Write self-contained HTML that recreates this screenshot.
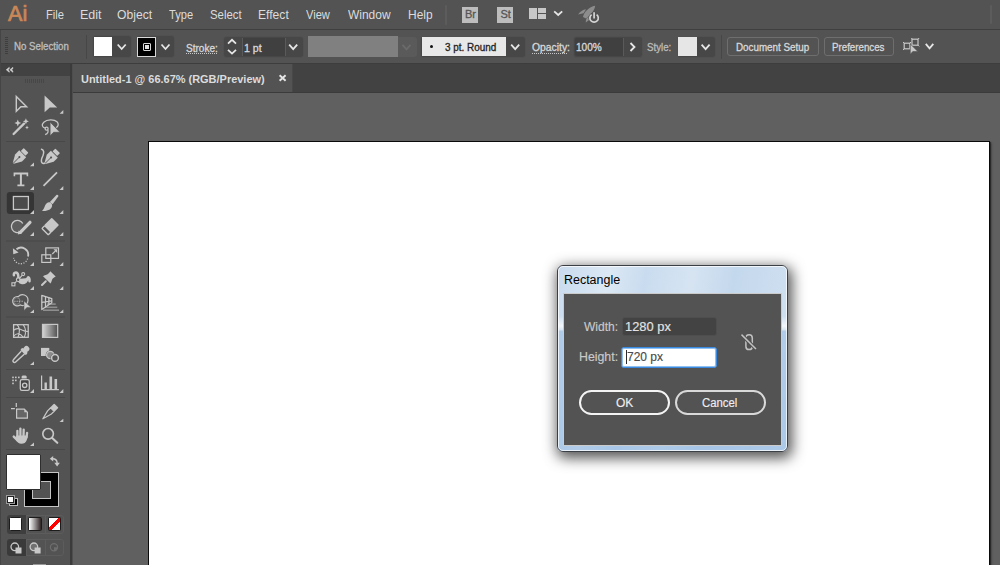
<!DOCTYPE html>
<html><head><meta charset="utf-8">
<style>
*{margin:0;padding:0;box-sizing:border-box}
html,body{width:1000px;height:565px;overflow:hidden;background:#606060;font-family:"Liberation Sans",sans-serif}
.a{position:absolute}
.t{position:absolute;white-space:nowrap;line-height:1}
#menubar{left:0;top:0;width:1000px;height:29px;background:#535353}
#ctrl{left:0;top:29px;width:1000px;height:35px;background:#535353;border-top:1px solid #3f3f3f;border-bottom:1px solid #3d3d3d}
#tabrow{left:72px;top:64px;width:928px;height:29px;background:#424242;border-bottom:1.5px solid #3b3b3b}
#tab{left:73px;top:64px;width:220px;height:27.5px;background:#535353;border-right:1px solid #484848}
#tools{left:0;top:64px;width:70px;height:501px;background:#535353}
#toolhead{left:0;top:64px;width:70px;height:12px;background:#424242}
#toolsep{left:70px;top:64px;width:3px;height:501px;background:linear-gradient(90deg,#3b3b3b 0 2px,#4e4e4e 2px)}
.m{color:#dcdcdc;font-size:12.5px}
.c{color:#d8d8d8;font-size:10px;-webkit-text-stroke:0.3px currentColor}
.dd{position:absolute;background:#474747;border-radius:3px;box-shadow:0 0 0 1px #505050}
.chev{position:absolute;width:6px;height:6px;border-right:1.6px solid #d8d8d8;border-bottom:1.6px solid #d8d8d8;transform:rotate(45deg)}
.sep{position:absolute;background:#474747;width:1px}
.tsep{position:absolute;left:6px;width:59px;height:1px;background:#4a4a4a}
.tri{position:absolute;width:0;height:0;border-left:4px solid transparent;border-bottom:4px solid #c8c8c8}
svg{position:absolute;overflow:visible}
</style></head><body>
<!-- MENU BAR -->
<div id="menubar" class="a"></div>
<div id="t1" class="t" style="left:8.0px;top:3px;font-size:22px;color:#c98758;-webkit-text-stroke:0.7px #c98758;transform-origin:0 0;transform:scaleX(0.98)">Ai</div>
<div id="t2" class="t m" style="left:46.1px;top:9px;transform-origin:0 0;transform:scaleX(0.895)">File</div>
<div id="t3" class="t m" style="left:80.0px;top:9px">Edit</div>
<div id="t4" class="t m" style="left:117.0px;top:9px;transform-origin:0 0;transform:scaleX(0.971)">Object</div>
<div id="t5" class="t m" style="left:169.0px;top:9px;transform-origin:0 0;transform:scaleX(0.889)">Type</div>
<div id="t6" class="t m" style="left:210.1px;top:9px;transform-origin:0 0;transform:scaleX(0.912)">Select</div>
<div id="t7" class="t m" style="left:258.0px;top:9px;transform-origin:0 0;transform:scaleX(0.969)">Effect</div>
<div id="t8" class="t m" style="left:306.0px;top:9px;transform-origin:0 0;transform:scaleX(0.889)">View</div>
<div id="t9" class="t m" style="left:348.0px;top:9px;transform-origin:0 0;transform:scaleX(0.957)">Window</div>
<div id="t10" class="t m" style="left:408.0px;top:9px;transform-origin:0 0;transform:scaleX(0.958)">Help</div>
<div class="sep" style="left:445px;top:5px;width:2.3px;height:19.5px;background:#5c5c5c;border-radius:1px"></div>
<div class="a" style="left:462px;top:7px;width:16px;height:16px;background:#bdbdbd"></div>
<div id="t11" class="t" style="left:465px;top:9px;font-size:11px;color:#555;-webkit-text-stroke:0.3px #555">Br</div>
<div class="a" style="left:497px;top:7px;width:16px;height:16px;background:#bdbdbd"></div>
<div id="t12" class="t" style="left:500.5px;top:9px;font-size:11px;color:#555;-webkit-text-stroke:0.3px #555">St</div>
<div class="a" style="left:529px;top:8px;width:8px;height:11px;background:#c8c8c8"></div>
<div class="a" style="left:538px;top:8px;width:8px;height:5px;background:#c8c8c8"></div>
<div class="a" style="left:538px;top:14px;width:8px;height:5px;background:#c8c8c8"></div>
<svg style="left:0;top:0" width="1000" height="29">
<path d="M554.2 11.3 L558.2 15 L562.2 11.3" fill="none" stroke="#e6e6e6" stroke-width="1.8"/>
<path d="M583 16.9 C584 12 589 7 595.2 5.8 C594.5 11 590 15.5 586 18.5Z" fill="#8c8c8c"/>
<path d="M578 14.6 C580 11.5 583 9.5 586 9.2 L583.5 13.2Z" fill="#8c8c8c"/>
<path d="M585.8 22.5 C585.5 20 586.5 18 588.5 16.8 L589 20Z" fill="#8c8c8c"/>
<circle cx="594.1" cy="17.9" r="5.6" fill="#535353"/>
<path d="M591.6 14.6 A4.2 4.2 0 1 0 596.6 14.6" fill="none" stroke="#d4d4d4" stroke-width="1.7"/>
<path d="M594.1 12.2 V18.5" stroke="#535353" stroke-width="3"/>
<path d="M594.1 12.2 V18.5" stroke="#d4d4d4" stroke-width="1.7"/>
</svg>
<div class="sep" style="left:989.6px;top:5px;width:2.6px;height:19.4px;background:#5c5c5c;border-radius:1px"></div>

<!-- CONTROL BAR -->
<div id="ctrl" class="a"></div>
<div class="a" style="left:5px;top:37px;width:3px;height:18px;background:repeating-linear-gradient(#3e3e3e 0 1px,transparent 1px 2px)"></div>
<div id="t13" class="t c" style="left:14.1px;top:42px;color:#bebebe;font-size:10px;transform-origin:0 0;transform:scaleX(0.967)">No Selection</div>
<div class="sep" style="left:86px;top:35px;height:24px;background:#474747"></div>
<div class="dd" style="left:92.8px;top:36.3px;width:38px;height:20.7px"></div>
<div class="a" style="left:93.5px;top:37px;width:18.5px;height:19px;background:#fff"></div>
<div class="dd" style="left:136.8px;top:36.3px;width:37.5px;height:20.7px"></div>
<div class="a" style="left:137px;top:37px;width:19px;height:19.5px;background:#000;border:1px solid #d8d8d8"></div>
<div class="a" style="left:143px;top:43px;width:7.5px;height:7.5px;border:1px solid #d8d8d8;border-radius:1px"></div>
<div class="a" style="left:145px;top:45px;width:3.5px;height:3.5px;background:#e0e0e0"></div>
<div id="t14" class="t c" style="left:186.1px;top:44px;transform-origin:0 0;transform:scaleX(1.004)">Stroke:</div>
<div class="a" style="left:186px;top:53px;width:31px;height:1px;background:repeating-linear-gradient(90deg,#c8c8c8 0 1px,transparent 1px 2px)"></div>
<div class="dd" style="left:223.5px;top:36.5px;width:79.5px;height:20px"></div>
<div class="a" style="left:241.5px;top:37.5px;width:44px;height:18px;background:#404040;border-left:1px solid #5a5a5a;border-right:1px solid #5a5a5a"></div>
<div id="t15" class="t c" style="left:243.9px;top:44px;transform-origin:0 0;transform:scaleX(1.062)">1 pt</div>
<div class="a" style="left:308px;top:36.3px;width:89.5px;height:20.5px;background:#808080"></div>
<div class="a" style="left:397.5px;top:36.5px;width:19px;height:20px;background:#5a5a5a;border-radius:0 3px 3px 0"></div>
<div class="dd" style="left:421px;top:36.5px;width:103.5px;height:20px"></div>
<div class="a" style="left:421.5px;top:37px;width:84.5px;height:19px;background:#e8e8e8"></div>
<div class="a" style="left:429.6px;top:45.3px;width:3px;height:3px;background:#111;border-radius:50%"></div>
<div id="t16" class="t c" style="left:445.0px;top:43px;color:#222;transform-origin:0 0;transform:scaleX(0.989)">3 pt. Round</div>
<div id="t17" class="t c" style="left:532.0px;top:43px;transform-origin:0 0;transform:scaleX(1.034)">Opacity:</div>
<div class="a" style="left:532px;top:53px;width:36px;height:1px;background:repeating-linear-gradient(90deg,#c8c8c8 0 1px,transparent 1px 2px)"></div>
<div class="dd" style="left:573.5px;top:36.5px;width:68px;height:20px"></div>
<div class="a" style="left:574.5px;top:37.5px;width:49px;height:18px;background:#404040;border-right:1px solid #5a5a5a;border-radius:2px 0 0 2px"></div>
<div id="t18" class="t c" style="left:576.1px;top:43px;transform-origin:0 0;transform:scaleX(1.005)">100%</div>
<div id="t19" class="t c" style="left:647.1px;top:43px;color:#bcbcbc;transform-origin:0 0;transform:scaleX(0.968)">Style:</div>
<div class="dd" style="left:677.5px;top:36.5px;width:37px;height:20px"></div>
<div class="a" style="left:678px;top:37px;width:18.5px;height:19px;background:#e6e6e6"></div>
<div class="sep" style="left:720.5px;top:35px;height:24px;background:#474747"></div>
<div class="a" style="left:727px;top:37px;width:91.5px;height:18.5px;border:1px solid #6e6e6e;border-radius:3px"></div>
<div id="t20" class="t c" style="left:736.0px;top:43px;transform-origin:0 0;transform:scaleX(0.982)">Document Setup</div>
<div class="a" style="left:823.7px;top:37px;width:70.3px;height:18.5px;border:1px solid #6e6e6e;border-radius:3px"></div>
<div id="t21" class="t c" style="left:832.1px;top:43px;transform-origin:0 0;transform:scaleX(0.973)">Preferences</div>
<svg style="left:0;top:0" width="1000" height="64"><path d="M117.7 44.5 L121.7 49.0 L125.7 44.5" fill="none" stroke="#e6e6e6" stroke-width="1.8"/><path d="M161.5 44.5 L165.5 49.0 L169.5 44.5" fill="none" stroke="#e6e6e6" stroke-width="1.8"/><path d="M228 43.6 L232 39.8 L236 43.6" fill="none" stroke="#e6e6e6" stroke-width="1.8"/><path d="M228 49.8 L232.0 53.599999999999994 L236 49.8" fill="none" stroke="#e6e6e6" stroke-width="1.8"/><path d="M289.2 44.6 L293.2 49.1 L297.2 44.6" fill="none" stroke="#e6e6e6" stroke-width="1.8"/><path d="M402.5 44.8 L406.5 49.3 L410.5 44.8" fill="none" stroke="#6a6a6a" stroke-width="1.8"/><path d="M511.2 44.6 L515.2 49.1 L519.2 44.6" fill="none" stroke="#e6e6e6" stroke-width="1.8"/><path d="M630.5 43 L634.5 47 L630.5 51" fill="none" stroke="#e6e6e6" stroke-width="1.8"/><path d="M701.6 44.6 L705.6 49.1 L709.6 44.6" fill="none" stroke="#e6e6e6" stroke-width="1.8"/><path d="M925.8 43.8 L929.55 48.3 L933.3 43.8" fill="none" stroke="#e6e6e6" stroke-width="1.8"/><g fill="none" stroke="#c8c8c8" stroke-width="1.2"><rect x="904.2" y="43.2" width="5.6" height="5.6"/><rect x="912" y="39.2" width="6" height="6"/></g><g stroke="#c8c8c8" stroke-width="1"><path d="M903 42 l1.5 1.5 M911 42 l-1.5 1.5 M903 50 l1.5 -1.5 M911.3 38 l1.3 1.3 M919.2 38 l-1.3 1.3 M919.2 46.4 l-1.3 -1.3"/></g><path d="M910.3 44 V54.3 L912.8 51.5 H917.8Z" fill="#c8c8c8" stroke="#535353" stroke-width="0.6"/></svg>
<!-- TAB ROW -->
<div id="tabrow" class="a"></div>
<div id="tab" class="a"></div>
<div id="t22" class="t" style="left:81.0px;top:74px;font-size:11.5px;font-weight:bold;color:#dcdcdc;transform-origin:0 0;transform:scaleX(0.953)">Untitled-1 @ 66.67% (RGB/Preview)</div>
<svg style="left:0;top:0" width="300" height="93"><path d="M279.6 75.2 L285.6 80.8 M285.6 75.2 L279.6 80.8" stroke="#e6e6e6" stroke-width="1.9"/></svg>

<!-- ARTBOARD -->
<div class="a" style="left:148px;top:141px;width:842px;height:430px;background:#fff;border:1px solid #0a0a0a;box-shadow:1px 1px 1px rgba(0,0,0,.45),2px 2px 2px rgba(0,0,0,.2)"></div>

<!-- TOOLS -->
<div id="tools" class="a"></div>
<div id="toolhead" class="a"></div>
<div id="toolsep" class="a"></div>
<div class="a" style="left:0;top:30px;width:1px;height:535px;background:#454545"></div>
<!--TB-->
<svg style="left:0;top:0" width="72" height="565" viewBox="0 0 72 565">
<g fill="none" stroke="#c8c8c8" stroke-width="1.3">
<!-- header << -->
<path d="M9.3 67.3 L6.2 69.8 L9.3 72.3 V70.9 L8 69.8 L9.3 68.7Z M12.9 67.3 L9.8 69.8 L12.9 72.3 V70.9 L11.6 69.8 L12.9 68.7Z" fill="#d4d4d4" stroke="#d4d4d4" stroke-width="0.5"/>
<!-- grip -->
<path d="M25.5 79v4M27.5 79v4M29.5 79v4M31.5 79v4M33.5 79v4M35.5 79v4M37.5 79v4M39.5 79v4M41.5 79v4M43.5 79v4" stroke="#474747" stroke-width="1"/>
<!-- row1: outline arrow -->
<path d="M16.3 96.6 V111.3 L20.9 106.7 H26.6 Z" stroke-width="1.45" stroke-linejoin="miter"/>
</g>
<g fill="#c8c8c8">
<path d="M44.6 95.6 V112.3 L49.8 107.4 H57.2 Z"/>
<!-- triangles -->
<path d="M59.6 113.8 L63.3 110 V113.8Z"/>
<path d="M30 166.3 L34 162.4 V166.3Z"/>
<path d="M30 190 L34 186 V190Z"/>
<path d="M59.5 190 L63.3 186 V190Z"/>
<path d="M30 214 L34 210 V214Z"/>
<path d="M59.5 214 L63.3 210 V214Z"/>
<path d="M30 236 L34 232 V236Z"/>
<path d="M59.5 236 L63.3 232 V236Z"/>
<path d="M30 266 L34 262 V266Z"/>
<path d="M59.5 266 L63.3 262 V266Z"/>
<path d="M30 290 L34 286 V290Z"/>
<path d="M59.5 290 L63.3 286 V290Z"/>
<path d="M30 313 L34 309.4 V313Z"/>
<path d="M59.5 313 L63.3 309.4 V313Z"/>
<path d="M30 365 L34 361.4 V365Z"/>
<path d="M30 393 L34 389 V393Z"/>
<path d="M59.5 393 L63.3 389 V393Z"/>
<path d="M59.5 422 L63.3 418.7 V422Z"/>
<path d="M30 446 L34 442.4 V446Z"/>
</g>
<!-- separators -->
<g fill="#484848">
<rect x="6" y="141" width="59" height="1"/>
<rect x="6" y="240.5" width="59" height="1"/>
<rect x="6" y="316.5" width="59" height="1"/>
<rect x="6" y="369" width="59" height="1"/>
<rect x="6" y="397" width="59" height="1"/>
<rect x="6" y="449" width="59" height="1"/>
</g>
<!-- row2: magic wand -->
<g fill="#c8c8c8">
<path d="M13.6 134 L24 123.6" stroke="#c8c8c8" stroke-width="2.3" stroke-linecap="round"/>
<path d="M17.8 119.6 L18.8 122 L21.2 123 L18.8 124 L17.8 126.4 L16.8 124 L14.4 123 L16.8 122Z"/>
<path d="M25.9 118.3 L26.8 120.4 L28.9 121.3 L26.8 122.2 L25.9 124.3 L25 122.2 L22.9 121.3 L25 120.4Z"/>
<path d="M27 125.6 L27.6 126.9 L28.9 127.5 L27.6 128.1 L27 129.4 L26.4 128.1 L25.1 127.5 L26.4 126.9Z"/>
</g>
<!-- lasso -->
<g fill="none" stroke="#c8c8c8" stroke-width="1.25">
<path d="M45.5 128.2 C42 127.5 41.3 124.5 43.8 122.2 C47 119.3 54 119 57 121.8 C58.8 123.6 58.6 126.3 56.3 127.6"/>
<circle cx="46.6" cy="128.7" r="1.5"/>
<path d="M47.8 129.8 C48.5 131.5 48 133.5 45.2 134.6"/>
</g>
<path d="M50.1 122 V135.8 L53.6 132.3 H60 Z" fill="#c8c8c8" stroke="#535353" stroke-width="0.7"/>
<!-- row3: pen -->
<g transform="translate(19.7 156.8) rotate(45)" fill="#c8c8c8">
<rect x="-3.3" y="-9" width="6.6" height="4.1" rx="0.6"/>
<path d="M-4.9 -4.2 H4.9 V1.6 L0.7 9 H-0.7 L-4.9 1.6Z"/>
<path d="M0 9.2 V0.6" stroke="#535353" stroke-width="0.9"/>
<circle cx="0" cy="0.4" r="1.05" fill="#535353"/>
</g>
<g transform="translate(51.35 157.15) rotate(45)" fill="#c8c8c8">
<rect x="-3.3" y="-9" width="6.6" height="4.1" rx="0.6"/>
<path d="M-4.9 -4.2 H4.9 V1.6 L0.7 9 H-0.7 L-4.9 1.6Z"/>
<path d="M0 9.2 V0.6" stroke="#535353" stroke-width="0.9"/>
<circle cx="0" cy="0.4" r="1.05" fill="#535353"/>
</g>
<path d="M41.5 149.3 C43.8 150 44.3 152.5 43 155.5 C41.5 158.5 40.8 161.3 42 162.8 C42.6 163.5 43.5 163.6 44.6 163.3" fill="none" stroke="#c8c8c8" stroke-width="1.5" stroke-linecap="round"/>
<!-- row4: type T -->
<path fill="#c8c8c8" d="M13.6 172.6 H28.2 V176.2 H26.6 V174.5 H21.9 V184.6 H24.4 V186.3 H17.4 V184.6 H19.9 V174.5 H15.2 V176.2 H13.6Z"/>
<path d="M43.5 185.8 L57 172.3" stroke="#c8c8c8" stroke-width="1.75" fill="none"/>
<!-- row5: rect selected -->
<rect x="6.8" y="192" width="27.2" height="22" rx="3" fill="#353535"/>
<path fill="#c8c8c8" d="M30 214 L34 210 V214Z"/>
<rect x="13.4" y="196.5" width="15" height="13" fill="#4b4b4b" stroke="#c8c8c8" stroke-width="1.3"/>
<!-- paintbrush -->
<path fill="#c8c8c8" d="M56.4 194.9 C57.6 194.2 58.8 195.3 58.2 196.5 L52.6 204.2 L49.9 202.1Z"/>
<path fill="#c8c8c8" d="M50.2 202.6 C52.3 203.6 52.8 206 51.3 208 C49.6 210.3 45.6 211.3 42 211.1 C43.6 209.8 44.3 207.6 45.1 205.6 C46.1 203.3 48.2 201.7 50.2 202.6Z"/>
<!-- row6: shaper -->
<path d="M20.5 231.8 A6.1 6.1 0 1 1 22.8 223.5" fill="#5e5e5e" stroke="#c8c8c8" stroke-width="1.3"/>
<path d="M20.3 232.3 L30 222.3" stroke="#c8c8c8" stroke-width="3.2" stroke-linecap="round"/>
<path d="M17.8 234.6 L18.6 230.6 L21.8 233.6Z" fill="#c8c8c8"/>
<!-- eraser -->
<g transform="translate(50.1 226.6) rotate(45)">
<rect x="-5.2" y="-7.5" width="10.4" height="10.6" rx="0.8" fill="#c8c8c8"/>
<rect x="-4.5" y="3.1" width="9" height="4" rx="0.8" fill="none" stroke="#c8c8c8" stroke-width="1.4"/>
</g>
<!-- row7: rotate -->
<path d="M16.5 249.2 A7.2 7.2 0 0 1 28 256.5" fill="none" stroke="#c8c8c8" stroke-width="1.8"/>
<path d="M27.6 258.6 A7.2 7.2 0 0 1 13.6 257.8" fill="none" stroke="#c8c8c8" stroke-width="1.3" stroke-dasharray="1.1 1.5"/>
<path d="M12.9 248.2 L18.6 252.4 L13.3 254.2Z" fill="#c8c8c8"/>
<!-- scale -->
<g fill="none" stroke="#c8c8c8" stroke-width="1.2">
<rect x="41.8" y="254.8" width="9" height="7.6"/>
<rect x="45.8" y="247.9" width="12.7" height="10.5"/>
<path d="M52.3 254 L56.5 249.8"/>
</g>
<path d="M57.2 249.2 L57.2 253 L53.5 249.2Z" fill="#c8c8c8"/>
<!-- row8: puppet warp -->
<path d="M13.9 275.2 C13.4 272.6 16.6 271.4 17.8 273.9 C18.7 275.8 18.1 279 19.2 281.2 C20.4 283.3 23.5 283.6 25.6 282.1 C27 281 27.4 279 27.9 277.6 C28.6 276.6 29.9 278.6 29.5 281.3" fill="none" stroke="#c8c8c8" stroke-width="2.5" stroke-linecap="round"/>
<path d="M18.5 279.5 C21 278 25 278.8 28 277.5 L26.8 281.8 C24.5 283.8 20.5 283.8 18.8 281.5Z" fill="#c8c8c8"/>
<path d="M14.6 283 L16.6 281.3 M19.6 278.3 L22 275.3" stroke="#c8c8c8" stroke-width="1.1"/>
<rect x="11.9" y="282.8" width="3" height="3" fill="#535353" stroke="#c8c8c8" stroke-width="1.1"/>
<circle cx="18.2" cy="279.7" r="1.8" fill="#535353" stroke="#c8c8c8" stroke-width="1.2"/>
<circle cx="23.2" cy="274.1" r="1.5" fill="#535353" stroke="#c8c8c8" stroke-width="1.1"/>
<!-- pin -->
<path d="M50.3 271.3 L55.7 276.6 C54 277.5 52.5 278.5 52 280 C51.5 281.5 51.2 282.5 50.5 283.5 L43 276.3 C44 275.5 45.5 275 47 274.5 C48.5 274 49.5 272.5 50.3 271.3Z" fill="#c8c8c8"/>
<path d="M42 285 L45.8 281.2" stroke="#c8c8c8" stroke-width="2" stroke-linecap="round"/>
<!-- row9: shape builder -->
<path d="M18.3 296.6 A5.5 5.5 0 0 1 28 300.2 A5.5 5.5 0 0 1 22.5 305.7 L20.2 305 A4.7 4.7 0 1 1 18.3 296.6Z" fill="none" stroke="#c8c8c8" stroke-width="1.2"/>
<circle cx="16.8" cy="301" r="3.3" fill="none" stroke="#8a8a8a" stroke-width="0.9"/>
<path d="M14.4 301.2h1.1M16.6 301.2h1.1M18.8 301.2h1.1M21.6 301.2h1.1" stroke="#c8c8c8" stroke-width="1.1"/>
<path d="M24 300.9 V310.4 L27 307.5 H31.2 Z" fill="#c8c8c8" stroke="#535353" stroke-width="0.5"/>
<!-- perspective grid -->
<g fill="#8e8e8e"><rect x="47" y="303.3" width="8.7" height="1.6"/><rect x="45" y="306.5" width="12.3" height="1.6"/><rect x="43" y="309.4" width="16" height="1.6"/></g>
<g fill="none" stroke="#c8c8c8" stroke-width="1.25" stroke-linejoin="round">
<path d="M41.8 295.3 L51.8 298.6 V302.8 L41.8 309.6Z"/>
<path d="M45.5 296.5 V307 M48.9 297.6 V304.6 M41.8 302.3 L51.8 300.8"/>
</g>
<!-- row10: mesh -->
<rect x="13.6" y="324.7" width="14.6" height="12.6" fill="none" stroke="#c8c8c8" stroke-width="1.3"/>
<path d="M17.2 324.7 C19.6 327.5 20.4 331.5 18 337.3 M23.2 324.7 C26 328.5 26.2 333 24.3 337.3 M13.6 330.3 C16 327.8 19 328.3 22 330 C24 331 26.5 331.6 28.2 331.5 M13.6 336.2 C16.5 332.8 20 332.8 23.3 337.3" fill="none" stroke="#c8c8c8" stroke-width="1.1"/>
<!-- gradient -->
<defs><linearGradient id="gr" x1="0" x2="1"><stop offset="0" stop-color="#d6d6d6"/><stop offset="1" stop-color="#505050"/></linearGradient></defs>
<rect x="42.5" y="324.4" width="15.2" height="13" fill="url(#gr)" stroke="#c8c8c8" stroke-width="1.2"/>
<!-- row11: eyedropper -->
<g transform="translate(20.6 354.8) rotate(45)">
<ellipse cx="0" cy="-8.2" rx="2.9" ry="3" fill="#c8c8c8"/>
<rect x="-3.9" y="-6.6" width="7.8" height="3.4" rx="1.5" fill="#c8c8c8"/>
<path d="M-2.2 -3.3 L-1.6 8.6 A1.6 1.6 0 0 0 1.6 8.6 L2.2 -3.3" fill="none" stroke="#c8c8c8" stroke-width="1.45"/>
</g>
<!-- blend -->
<rect x="41" y="347.9" width="8.3" height="8.1" fill="#c8c8c8"/>
<circle cx="50.3" cy="355" r="4.6" fill="#535353"/>
<circle cx="50.3" cy="355" r="3.7" fill="#8c8c8c" stroke="#c4c4c4" stroke-width="1.3"/>
<circle cx="55" cy="357.9" r="4.5" fill="#535353"/>
<circle cx="55" cy="357.9" r="3.4" fill="#535353" stroke="#c8c8c8" stroke-width="1.5"/>
<!-- row12: symbol sprayer -->
<g fill="#c8c8c8">
<rect x="12.2" y="376.6" width="1.6" height="1.6"/><rect x="15" y="376.6" width="1.6" height="1.6"/><rect x="18" y="376.6" width="1.6" height="1.6"/>
<rect x="12.2" y="379.6" width="1.6" height="1.6"/><rect x="15" y="379.6" width="1.6" height="1.6"/>
<rect x="12.2" y="382.6" width="1.6" height="1.6"/>
<path d="M21.6 378.6 V376.8 C21.6 375.8 22.4 375.4 24.1 375.4 C25.8 375.4 26.7 375.8 26.7 376.8 V378.6Z"/>
</g>
<rect x="20.3" y="379.6" width="9" height="10.7" rx="1.6" fill="#454545" stroke="#c8c8c8" stroke-width="1.3"/>
<circle cx="24.7" cy="385.3" r="2.2" fill="#4a4a4a" stroke="#c8c8c8" stroke-width="1.3"/>
<!-- column graph -->
<path d="M41.6 375.5 V389.6 H58.9" fill="none" stroke="#c8c8c8" stroke-width="1.2"/>
<g fill="#c8c8c8"><rect x="44.5" y="382.5" width="2.4" height="6.5"/><rect x="49.5" y="376.5" width="2.6" height="12.5"/><rect x="54.5" y="379" width="2.6" height="10"/></g>
<!-- row13: artboard -->
<path d="M16.3 403 V406.9 M11 408.6 H14.9" stroke="#c8c8c8" stroke-width="1.2"/>
<path d="M16.6 409.2 H24.3 L27.4 412.3 V418.1 H16.6Z" fill="#666" stroke="#c8c8c8" stroke-width="1.2"/>
<path d="M24.3 409.2 V412.3 H27.4Z" fill="#c8c8c8"/>
<!-- slice (knife) -->
<g transform="translate(49.6 412.3) rotate(45) scale(0.9)">
<rect x="-3.4" y="-10.6" width="6.8" height="6.4" rx="0.8" fill="#c8c8c8"/>
<path d="M-2.7 -4.4 H2.7 V0.5 L-0.2 10.4 L-2.7 0.5Z" fill="none" stroke="#c8c8c8" stroke-width="1.35" stroke-linejoin="round"/>
</g>
<!-- row14: hand -->
<g stroke="#c8c8c8" stroke-linecap="round" fill="none">
<path d="M17.4 437 V430.8 M20.4 436 V428.6 M23.5 436 L23.7 429.6 M26.5 437.5 L27.1 432.8" stroke-width="2.3"/>
<path d="M17.8 440.5 L13.8 436.6" stroke-width="2.5"/>
</g>
<path d="M16.2 435.5 H27.8 L26.8 440 C25.8 442.8 24 443.7 21.3 443.7 C18.8 443.7 17.3 442.3 16 440Z" fill="#c8c8c8"/>
<!-- zoom -->
<circle cx="48.1" cy="433.8" r="5.3" fill="none" stroke="#c8c8c8" stroke-width="1.65"/>
<path d="M52.2 438 L57.3 442.8" stroke="#c8c8c8" stroke-width="2.1" stroke-linecap="round"/>
<!-- fill/stroke -->
<rect x="6.5" y="454.5" width="34" height="34.5" fill="none"/>
</svg>

<!-- FILL / STROKE -->
<div class="a" style="left:24px;top:472px;width:34.5px;height:35px;background:#000;border:1px solid #c4c4c4"></div>
<div class="a" style="left:32px;top:481px;width:18.5px;height:18px;background:#535353;border:1px solid #c4c4c4"></div>
<div class="a" style="left:6px;top:454px;width:35px;height:35.5px;background:#fff;border:1px solid #2e2e2e;border-radius:1px"></div>
<div class="a" style="left:9px;top:498px;width:8.5px;height:8px;background:#000;border:1px solid #bdbdbd"></div>
<div class="a" style="left:7px;top:495.5px;width:7px;height:7px;background:#fff;border:1px solid #222;outline:1px solid #9a9a9a"></div>
<svg style="left:0;top:0" width="72" height="565">
<path d="M52.5 458.8 C56 458.8 57.1 460 57.1 463" fill="none" stroke="#c8c8c8" stroke-width="1.4"/>
<path d="M49.8 458.8 L53.2 456 V461.6Z M57.1 466.4 L54.3 462.8 H59.9Z" fill="#c8c8c8"/>
</svg>
<!-- color mode row -->
<div class="a" style="left:7px;top:514.5px;width:57px;height:19px;border:1px solid #5c5c5c;border-radius:3px"></div>
<div class="a" style="left:7px;top:514.5px;width:18.5px;height:19px;background:#3e3e3e;border-radius:3px 0 0 3px"></div>
<div class="a" style="left:25.5px;top:515px;width:1px;height:18px;background:#5c5c5c"></div>
<div class="a" style="left:44.5px;top:515px;width:1px;height:18px;background:#5c5c5c"></div>
<div class="a" style="left:8.5px;top:517px;width:13.5px;height:13.5px;background:#fff;border:1.5px solid #1c1c1c;border-radius:1.5px"></div>
<div class="a" style="left:28px;top:517px;width:13.5px;height:13.5px;background:linear-gradient(90deg,#fff,#2e2424);border:1.5px solid #1c1c1c;border-radius:1.5px"></div>
<div class="a" style="left:47.8px;top:517px;width:13.5px;height:13.5px;background:linear-gradient(135deg,#fff 0 40%,#f00 40% 62%,#fff 62%);border:1.5px solid #1c1c1c;border-radius:1.5px"></div>
<!-- draw mode row -->
<div class="a" style="left:7px;top:538.8px;width:57px;height:17.5px;border:1px solid #5c5c5c;border-radius:3px"></div>
<div class="a" style="left:7px;top:538.8px;width:18.5px;height:17.5px;background:#3a3a3a;border-radius:3px 0 0 3px"></div>
<div class="a" style="left:25.5px;top:539.3px;width:1px;height:16.5px;background:#5c5c5c"></div>
<div class="a" style="left:44.5px;top:539.3px;width:1px;height:16.5px;background:#5c5c5c"></div>
<svg style="left:0;top:0" width="72" height="565">
<circle cx="14.8" cy="546.8" r="3.8" fill="none" stroke="#c8c8c8" stroke-width="1.3"/>
<rect x="15.5" y="547.5" width="6" height="6" fill="#c8c8c8"/>
<circle cx="33.9" cy="546.8" r="3.8" fill="#707070" stroke="#c8c8c8" stroke-width="1.3"/>
<rect x="34.6" y="547.5" width="6" height="6" fill="#c8c8c8"/>
<circle cx="54" cy="547.3" r="3.6" fill="none" stroke="#6e6e6e" stroke-width="1.2"/>
<path d="M54 547.3 H57.6 A3.6 3.6 0 0 1 54 550.9Z" fill="#6e6e6e"/>
<rect x="33" y="564" width="13" height="1" fill="#9a9a9a"/>
</svg>

<!--/TB-->

<!-- DIALOG -->
<div class="a" style="left:557px;top:265px;width:231px;height:187px;border:1px solid #3b4046;border-radius:6px;background:linear-gradient(180deg,rgba(255,255,255,0) 0,rgba(255,255,255,0) 50px,rgba(255,255,255,.75) 60px,rgba(255,255,255,.2) 64px,rgba(140,180,225,.45) 65px,rgba(140,180,225,.55) 100%),linear-gradient(100deg,#c8dbee 0%,#dce8f4 20%,#c9dcef 34%,#d6e4f2 52%,#c4d8ed 68%,#d3e2f1 100%);box-shadow:2px 4px 14px 2px rgba(0,0,0,.68);"></div>
<div class="a" style="left:558px;top:266px;width:229px;height:185px;border:1px solid rgba(255,255,255,.75);border-radius:5px"></div>
<div id="t24" class="t" style="left:564.0px;top:274px;font-size:12px;color:#000;transform-origin:0 0;transform:scaleX(1.038)">Rectangle</div>
<div class="a" style="left:563px;top:293px;width:219px;height:153px;background:#535353;border:1px solid rgba(255,255,255,.7)"></div>
<svg style="left:0;top:0" width="1000" height="565"><rect x="745.9" y="334.8" width="6.4" height="14.8" rx="3.2" fill="none" stroke="#c2c2c2" stroke-width="1.5"/><path d="M741.5 334.6 L756 349" stroke="#535353" stroke-width="3.6"/><path d="M741.5 334.6 L756 349" stroke="#c2c2c2" stroke-width="1.5"/></svg>
<div id="t25" class="t" style="left:584.0px;top:321px;font-size:12px;color:#cacaca;-webkit-text-stroke:0.15px currentColor">Width:</div>
<div class="a" style="left:621.5px;top:316.7px;width:95px;height:19.5px;background:#434343;border:1px solid #4e4e4e;border-radius:3px"></div>
<div id="t26" class="t" style="left:624.9px;top:321px;font-size:12px;color:#e4e4e4;transform-origin:0 0;transform:scaleX(1.073);-webkit-text-stroke:0.15px currentColor">1280 px</div>
<div id="t27" class="t" style="left:579.0px;top:351px;font-size:12px;color:#cacaca;transform-origin:0 0;transform:scaleX(1.028);-webkit-text-stroke:0.15px currentColor">Height:</div>
<div class="a" style="left:621px;top:347px;width:96px;height:20.5px;background:#fff;border:1px solid #3a8ae2;border-radius:3px;box-shadow:inset 0 0 0 1px #8fc0ef"></div>
<div id="t28" class="t" style="left:627.0px;top:351px;font-size:12px;color:#4a4a4a;-webkit-text-stroke:0.15px currentColor">720 px</div>
<div class="a" style="left:626px;top:350px;width:1px;height:13.5px;background:#2a2a2a"></div>
<div class="a" style="left:578.8px;top:389.5px;width:91px;height:25.5px;border:2px solid #f4f4f4;border-radius:13px"></div>
<div id="t29" class="t" style="left:616.0px;top:397px;font-size:12px;color:#eee;-webkit-text-stroke:0.15px currentColor">OK</div>
<div class="a" style="left:674.8px;top:389.5px;width:91px;height:25.5px;border:2px solid #d9d9d9;border-radius:13px"></div>
<div id="t30" class="t" style="left:702.1px;top:397px;font-size:12px;color:#eee;transform-origin:0 0;transform:scaleX(0.944);-webkit-text-stroke:0.15px currentColor">Cancel</div>
</body></html>
